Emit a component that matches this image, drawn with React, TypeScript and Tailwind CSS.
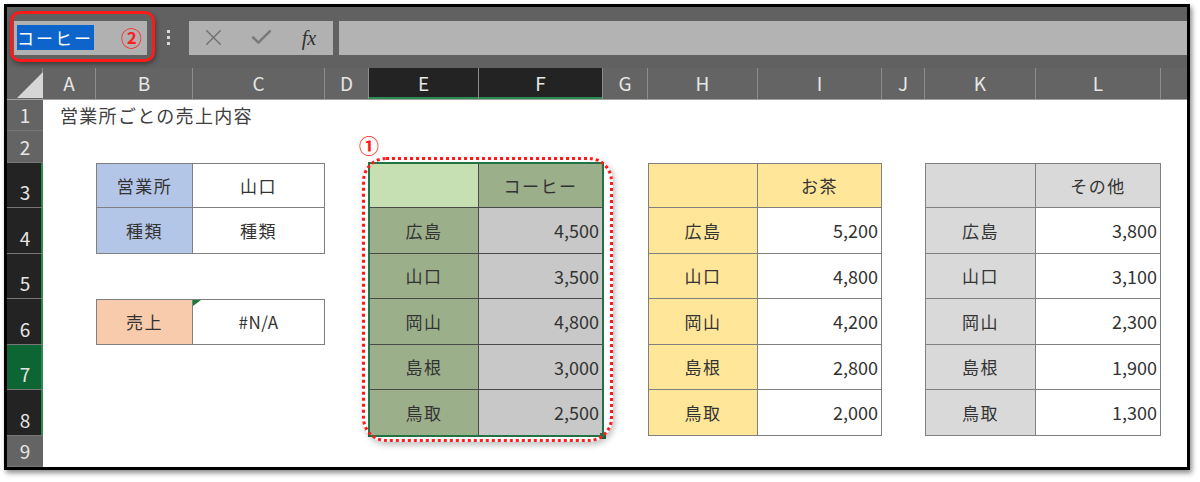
import { X, Check } from 'lucide-react';

const columns = [
  { label: 'A', w: 'w-[53px]', sel: false },
  { label: 'B', w: 'w-[97px]', sel: false },
  { label: 'C', w: 'w-[132px]', sel: false },
  { label: 'D', w: 'w-[44px]', sel: false },
  { label: 'E', w: 'w-[110px]', sel: true },
  { label: 'F', w: 'w-[124px]', sel: true },
  { label: 'G', w: 'w-[45px]', sel: false },
  { label: 'H', w: 'w-[110px]', sel: false },
  { label: 'I', w: 'w-[124px]', sel: false },
  { label: 'J', w: 'w-[43px]', sel: false },
  { label: 'K', w: 'w-[111px]', sel: false },
  { label: 'L', w: 'w-[125px]', sel: false },
];

const rows = [
  { n: 1, h: 'h-[31px]', tone: 'bg-[#646464]' },
  { n: 2, h: 'h-[32px]', tone: 'bg-[#646464]' },
  { n: 3, h: 'h-[45px]', tone: 'bg-[#232323] shadow-[inset_-2px_0_0_#2b8a52]' },
  { n: 4, h: 'h-[46px]', tone: 'bg-[#232323] shadow-[inset_-2px_0_0_#2b8a52]' },
  { n: 5, h: 'h-[45px]', tone: 'bg-[#232323] shadow-[inset_-2px_0_0_#2b8a52]' },
  { n: 6, h: 'h-[46px]', tone: 'bg-[#232323] shadow-[inset_-2px_0_0_#2b8a52]' },
  { n: 7, h: 'h-[45px]', tone: 'bg-[#0c6533] shadow-[inset_-2px_0_0_#2b8a52]' },
  { n: 8, h: 'h-[46px]', tone: 'bg-[#232323] shadow-[inset_-2px_0_0_#2b8a52]' },
  { n: 9, h: 'h-[31px]', tone: 'bg-[#646464]' },
];

const places = ['広島', '山口', '岡山', '島根', '鳥取'];

interface TableProps {
  place: string;
  title: string;
  values: string[];
  cornerBg: string;
  headBg: string;
  labelBg: string;
  valueBg: string;
  line: string;
  children?: React.ReactNode;
}

// 2列×6行の集計表（見出し＋営業所5件）
function SalesTable({ place, title, values, cornerBg, headBg, labelBg, valueBg, line, children }: TableProps) {
  const base = `flex items-center border-r border-b ${line}`;
  return (
    <div className={`${place} relative col-span-2 row-span-6 grid grid-cols-subgrid grid-rows-subgrid`}>
      <div className={`${base} border-l border-t ${cornerBg}`} />
      <div className={`${base} border-t justify-center tracking-[1.5px] ${headBg}`}>{title}</div>
      {places.map((p, i) => (
        <div key={p} className="contents">
          <div className={`${base} border-l justify-center tracking-[1.5px] ${labelBg}`}>{p}</div>
          <div className={`${base} justify-end pr-[3px] text-[18px] ${valueBg}`}>{values[i]}</div>
        </div>
      ))}
      {children}
    </div>
  );
}

export default function App() {
  return (
    <div className="w-[1200px] h-[482px] bg-white pl-[4px] pt-[4px] font-['Noto_Sans_CJK_JP','Noto_Sans',sans-serif]">
      <div className="w-[1186px] h-[466px] border-[3px] border-black flex flex-col shadow-[2px_3px_5px_rgba(0,0,0,0.45)] overflow-hidden">
        {/* 名前ボックス・数式バー */}
        <div className="relative h-[61px] shrink-0 bg-[#616161] flex items-center pl-[7px]">
          <div className="w-[133px] h-[34px] bg-[#b1b1b1] flex items-center pl-[3px]">
            <span className="h-[25px] w-[77px] bg-[#0d65cc] text-white text-[17px] tracking-[2px] leading-none flex items-center">
              コーヒー
            </span>
            <span className="ml-auto mr-[5px] text-[21px] font-bold text-[#ff1e1e] leading-none">②</span>
          </div>
          <div className="w-[42px] flex flex-col items-center gap-[3px]">
            <span className="w-[3px] h-[3px] bg-[#d8d8d8]" />
            <span className="w-[3px] h-[3px] bg-[#d8d8d8]" />
            <span className="w-[3px] h-[3px] bg-[#d8d8d8]" />
          </div>
          <div className="w-[144px] h-[34px] bg-[#b1b1b1] grid grid-cols-3 items-center justify-items-center">
            <X size={27} strokeWidth={1.2} color="#6e6e6e" />
            <Check size={25} strokeWidth={2.4} color="#7a7a7a" />
            <span className="font-['Liberation_Serif',serif] italic text-[20px] text-[#303030] leading-none">fx</span>
          </div>
          <div className="ml-[6px] flex-1 h-[34px] bg-[#b3b3b3]" />
          <div className="absolute left-[3px] top-[4px] w-[145px] h-[51px] rounded-[10px] border-[3px] border-[#ff1a1a] shadow-[1px_2px_4px_rgba(0,0,0,0.4)]" />
        </div>

        {/* 列見出し */}
        <div className="h-[32px] shrink-0 flex bg-[#646464] border-b border-[#a0a0a0] text-[19px] text-[#e6e6e6]">
          <div className="w-[36px] relative border-r border-[#8c8c8c]">
            <svg className="absolute left-[10px] top-[4px]" width="26" height="26" viewBox="0 0 26 26">
              <polygon points="26,0 26,26 0,26" fill="#d6d6d6" />
            </svg>
          </div>
          {columns.map((c) => (
            <div
              key={c.label}
              className={`${c.w} flex items-center justify-center border-r border-[#8c8c8c] ${
                c.sel ? 'bg-[#232323] shadow-[inset_0_-2px_0_#2b8a52]' : ''
              }`}
            >
              {c.label}
            </div>
          ))}
          <div className="flex-1" />
        </div>

        <div className="flex-1 flex">
          {/* 行見出し */}
          <div className="w-[36px] flex flex-col text-[19px] leading-[18px] text-[#e6e6e6]">
            {rows.map((r) => (
              <div key={r.n} className={`${r.h} ${r.tone} flex items-end justify-center pb-[6px] border-b border-[#777777]`}>
                {r.n}
              </div>
            ))}
          </div>

          {/* シート */}
          <div className="relative flex-1 bg-white text-[17px] text-[#333333] grid grid-cols-[53px_97px_132px_44px_110px_124px_45px_110px_124px_43px_111px_125px_1fr] grid-rows-[31px_32px_45px_46px_45px_46px_45px_46px_31px]">
            <div className="col-start-1 col-span-6 row-start-1 flex items-center pl-[17px] text-[18px] tracking-[1.3px] text-[#404040]">
              営業所ごとの売上内容
            </div>

            <div className="col-start-2 col-span-2 row-start-3 row-span-2 grid grid-cols-subgrid grid-rows-subgrid">
              <div className="flex items-center justify-center border border-[#808080] bg-[#b4c6e7] tracking-[1.5px]">営業所</div>
              <div className="flex items-center justify-center border-y border-r border-[#808080] tracking-[1.5px]">山口</div>
              <div className="flex items-center justify-center border-x border-b border-[#808080] bg-[#b4c6e7] tracking-[1.5px]">種類</div>
              <div className="flex items-center justify-center border-r border-b border-[#808080] tracking-[1.5px]">種類</div>
            </div>

            <div className="col-start-2 col-span-2 row-start-6 grid grid-cols-subgrid">
              <div className="flex items-center justify-center border border-[#808080] bg-[#f8cbad] tracking-[1.5px]">売上</div>
              <div className="relative flex items-center justify-center border-y border-r border-[#808080] tracking-[0.5px]">
                <svg className="absolute left-0 top-0" width="8" height="6" viewBox="0 0 8 6">
                  <polygon points="0,0 8,0 0,6" fill="#1b7a3a" />
                </svg>
                #N/A
              </div>
            </div>

            <SalesTable
              place="col-start-5 row-start-3"
              title="コーヒー"
              values={['4,500', '3,500', '4,800', '3,000', '2,500']}
              cornerBg="bg-[#c6e0b4]"
              headBg="bg-[#9caf8b]"
              labelBg="bg-[#9caf8b]"
              valueBg="bg-[#c8c8c8]"
              line="border-[#4a4a4a]"
            >
              <div className="absolute -inset-[1px] border-2 border-[#217346] pointer-events-none" />
              <div className="absolute -right-[3px] -bottom-[3px] w-[6px] h-[6px] bg-[#217346]" />
            </SalesTable>

            <SalesTable
              place="col-start-8 row-start-3"
              title="お茶"
              values={['5,200', '4,800', '4,200', '2,800', '2,000']}
              cornerBg="bg-[#ffe699]"
              headBg="bg-[#ffe699]"
              labelBg="bg-[#ffe699]"
              valueBg="bg-white"
              line="border-[#808080]"
            />

            <SalesTable
              place="col-start-11 row-start-3"
              title="その他"
              values={['3,800', '3,100', '2,300', '1,900', '1,300']}
              cornerBg="bg-[#d9d9d9]"
              headBg="bg-[#d9d9d9]"
              labelBg="bg-[#d9d9d9]"
              valueBg="bg-white"
              line="border-[#808080]"
            />

            {/* 注釈 ① */}
            <span className="absolute left-[316px] top-[36px] text-[20px] font-bold text-[#ff1a1a] leading-none">①</span>
            <div className="absolute left-[319px] top-[57px] w-[251px] h-[285px] rounded-[24px] border-[3px] border-dotted border-[#ff1a1a] shadow-[2px_3px_6px_rgba(0,0,0,0.25)] pointer-events-none" />
          </div>
        </div>
      </div>
    </div>
  );
}
